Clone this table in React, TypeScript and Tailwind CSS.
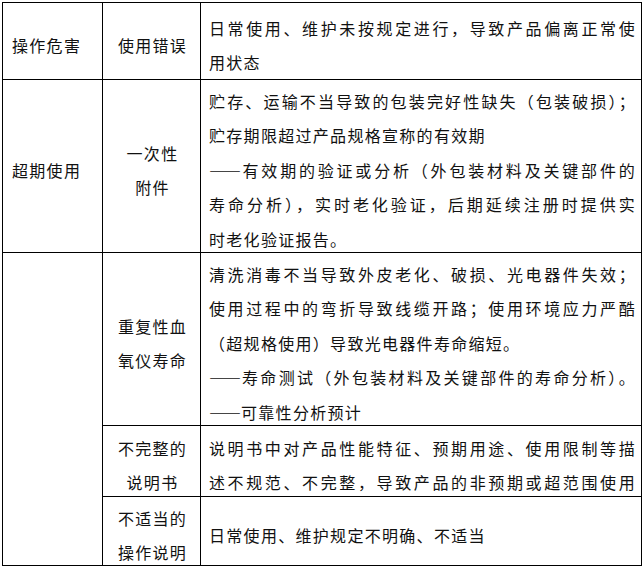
import type { ReactNode } from "react";

type LineProps = { children: ReactNode; full?: boolean };

function Line({ children, full }: LineProps) {
    return <div className={full ? "text-justify [text-align-last:justify]" : "text-left"}>{children}</div>;
}

// two em dashes drawn as one unbroken rule, as in the printed table
const Dash = () => <span className="tracking-normal [font-feature-settings:'fwid']">——</span>;

function HeadCell({ children }: { children: ReactNode }) {
    return <div className="bg-white flex items-center pl-[9px] pt-[8px]">{children}</div>;
}

function MidCell({ children }: { children: ReactNode }) {
    return (
        <div className="bg-white flex flex-col items-center justify-center text-center pt-[8px] pl-[2px]">
            {children}
        </div>
    );
}

function TextCell({ children }: { children: ReactNode }) {
    return <div className="bg-white flex flex-col justify-center pl-[8px] pr-[5px] pt-[8px]">{children}</div>;
}

export default function App() {
    return (
        <div className="bg-white min-h-[569px] pt-[2px] pl-[2px]">
            <div className="grid w-[640px] grid-cols-[99px_97px_440px] grid-rows-[76px_172px_172px_70px_68px] gap-px bg-black p-px font-['Noto_Sans_CJK_SC',sans-serif] text-[16px] leading-[34.5px] tracking-[1.3px] text-[#111]">
                {/* 操作危害 */}
                <HeadCell>操作危害</HeadCell>
                <MidCell>使用错误</MidCell>
                <TextCell>
                    <Line full>日常使用、维护未按规定进行，导致产品偏离正常使</Line>
                    <Line>用状态</Line>
                </TextCell>

                {/* 超期使用 */}
                <HeadCell>超期使用</HeadCell>
                <MidCell>
                    <div>一次性</div>
                    <div>附件</div>
                </MidCell>
                <TextCell>
                    <Line full>贮存、运输不当导致的包装完好性缺失（包装破损）；</Line>
                    <Line>贮存期限超过产品规格宣称的有效期</Line>
                    <Line full>
                        <Dash />有效期的验证或分析（外包装材料及关键部件的
                    </Line>
                    <Line full>寿命分析），实时老化验证，后期延续注册时提供实</Line>
                    <Line>时老化验证报告。</Line>
                </TextCell>

                {/* blank column spanning the last three rows */}
                <div className="bg-white row-span-3" />
                <MidCell>
                    <div>重复性血</div>
                    <div>氧仪寿命</div>
                </MidCell>
                <TextCell>
                    <Line full>清洗消毒不当导致外皮老化、破损、光电器件失效；</Line>
                    <Line full>使用过程中的弯折导致线缆开路；使用环境应力严酷</Line>
                    <Line>（超规格使用）导致光电器件寿命缩短。</Line>
                    <Line full>
                        <Dash />寿命测试（外包装材料及关键部件的寿命分析）。
                    </Line>
                    <Line>
                        <Dash />可靠性分析预计
                    </Line>
                </TextCell>

                <MidCell>
                    <div>不完整的</div>
                    <div>说明书</div>
                </MidCell>
                <TextCell>
                    <Line full>说明书中对产品性能特征、预期用途、使用限制等描</Line>
                    <Line full>述不规范、不完整，导致产品的非预期或超范围使用</Line>
                </TextCell>

                <MidCell>
                    <div>不适当的</div>
                    <div>操作说明</div>
                </MidCell>
                <TextCell>
                    <Line>日常使用、维护规定不明确、不适当</Line>
                </TextCell>
            </div>
        </div>
    );
}
